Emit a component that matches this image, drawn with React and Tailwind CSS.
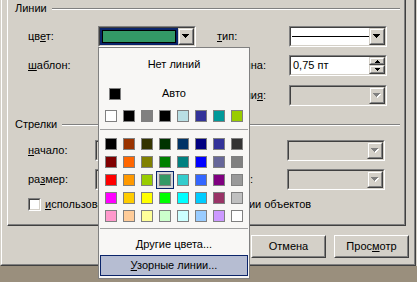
import React from 'react';

const recent = [
  'bg-[#ffffff]', 'bg-[#000000]', 'bg-[#808080]', 'bg-[#000000]',
  'bg-[#b9dfe4]', 'bg-[#333399]', 'bg-[#009999]', 'bg-[#99cc00]',
];

const palette = [
  'bg-[#000000]', 'bg-[#993300]', 'bg-[#333300]', 'bg-[#003300]', 'bg-[#003366]', 'bg-[#000080]', 'bg-[#333399]', 'bg-[#333333]',
  'bg-[#800000]', 'bg-[#ff6600]', 'bg-[#808000]', 'bg-[#008000]', 'bg-[#008080]', 'bg-[#0000ff]', 'bg-[#666699]', 'bg-[#808080]',
  'bg-[#ff0000]', 'bg-[#ff9900]', 'bg-[#99cc00]', 'bg-[#339966]', 'bg-[#33cccc]', 'bg-[#3366ff]', 'bg-[#800080]', 'bg-[#999999]',
  'bg-[#ff00ff]', 'bg-[#ffcc00]', 'bg-[#ffff00]', 'bg-[#00ff00]', 'bg-[#00ffff]', 'bg-[#00ccff]', 'bg-[#993366]', 'bg-[#c0c0c0]',
  'bg-[#ff99cc]', 'bg-[#ffcc99]', 'bg-[#ffff99]', 'bg-[#ccffcc]', 'bg-[#ccffff]', 'bg-[#99ccff]', 'bg-[#cc99ff]', 'bg-[#ffffff]',
];

const SELECTED = 19; // sea green

// pixel arrows, drawn with rects so they stay crisp
const DownArrow = ({ disabled }) => (
  <svg width="8" height="5" viewBox="0 0 8 5" shapeRendering="crispEdges">
    {disabled && <path d="M1 1h7v1H1zM2 2h5v1H2zM3 3h3v1H3zM4 4h1v1H4z" fill="#ffffff" />}
    <path d="M0 0h7v1H0zM1 1h5v1H1zM2 2h3v1H2zM3 3h1v1H3z" fill={disabled ? '#808080' : '#000000'} />
  </svg>
);

const SpinArrow = ({ up }) => (
  <svg width="5" height="3" viewBox="0 0 5 3" shapeRendering="crispEdges">
    <path d={up ? 'M2 0h1v1H2zM1 1h3v1H1zM0 2h5v1H0z' : 'M0 0h5v1H0zM1 1h3v1H1zM2 2h1v1H2z'} fill="#000000" />
  </svg>
);

// sunken 3d edit frame
const Field = ({ className = '', inner = '', children }) => (
  <div className={`border border-t-[#808080] border-l-[#808080] border-r-white border-b-white ${className}`}>
    <div className={`flex h-full border border-t-[#404040] border-l-[#404040] border-r-[#d4d0c8] border-b-[#d4d0c8] ${inner}`}>
      {children}
    </div>
  </div>
);

// raised button inside a combo / spinner
const ComboButton = ({ className = '', children }) => (
  <div className={`border border-t-[#d4d0c8] border-l-[#d4d0c8] border-r-[#404040] border-b-[#404040] bg-[#d4d0c8] ${className}`}>
    <div className="flex h-full items-center justify-center border border-t-white border-l-white border-r-[#808080] border-b-[#808080]">
      {children}
    </div>
  </div>
);

const PushButton = ({ children }) => (
  <div className="h-[23px] w-[75px] border border-t-white border-l-white border-r-[#404040] border-b-[#404040] bg-[#d4d0c8]">
    <div className="flex h-full items-center justify-center border border-t-[#d4d0c8] border-l-[#d4d0c8] border-r-[#808080] border-b-[#808080]">
      {children}
    </div>
  </div>
);

const GroupHead = ({ title, className = '' }) => (
  <div className={`flex h-[13px] items-center pl-[7px] pr-[4px] ${className}`}>
    <span>{title}</span>
    <div className="ml-[5px] flex-1 border-t border-b border-t-[#808080] border-b-white" />
  </div>
);

const DisabledCombo = () => (
  <Field className="h-[21px] w-[98px]" inner="bg-[#d4d0c8] justify-end">
    <ComboButton className="h-full w-[16px]">
      <DownArrow disabled />
    </ComboButton>
  </Field>
);

const Swatch = ({ color, selected }) => (
  <div
    className={`flex h-[18px] w-[18px] items-center justify-center ${
      selected ? 'border border-[#0a246a] bg-[#d4d5d8]' : ''
    }`}
  >
    <div className={`h-[12px] w-[12px] border border-[#808080] ${color}`} />
  </div>
);

const ColorPopup = () => (
  <div className="absolute left-[98px] top-[47px] flex h-[232px] w-[152px] flex-col border border-[#808080] bg-[#f8f7f5]">
    <div className="mt-[10px] text-center">Нет линий</div>
    <div className="mt-[16px] grid h-[12px] grid-cols-[22px_1fr_22px] items-center">
      <div className="pl-[10px]">
        <div className="h-[12px] w-[12px] border border-[#808080] bg-black" />
      </div>
      <div className="text-center">Авто</div>
      <div />
    </div>
    <div className="mx-[3px] mt-[8px] grid grid-cols-8">
      {recent.map((c, i) => (
        <Swatch key={i} color={c} />
      ))}
    </div>
    <div className="mx-[1px] mt-[4px] h-px bg-[#a0a0a0]" />
    <div className="mx-[3px] mt-[5px] grid grid-cols-8">
      {palette.map((c, i) => (
        <Swatch key={i} color={c} selected={i === SELECTED} />
      ))}
    </div>
    <div className="mx-[1px] mt-[3px] h-px bg-[#a0a0a0]" />
    <div className="mt-[9px] text-center">
      <u>Д</u>ругие цвета...
    </div>
    <div className="mx-[1px] mt-[4px] flex h-[21px] items-center justify-center border border-[#0a246a] bg-[#b6bdd2]">
      <span>
        <u>У</u>зорные линии...
      </span>
    </div>
  </div>
);

export default function App() {
  return (
    <div className="relative h-[282px] w-[417px] overflow-hidden bg-[#9a8f7d] font-['Liberation_Sans',Arial,sans-serif] text-[11px] leading-[13px] text-black">
      <div className="flex h-[266px]">
        {/* dialog frame */}
        <div className="h-full w-[416px] border-l border-r border-b border-l-[#d4d0c8] border-r-[#404040] border-b-[#404040]">
          <div className="flex h-full flex-col border-l border-r border-b border-l-white border-r-[#808080] border-b-[#808080] bg-[#d4d0c8]">
            {/* tab page */}
            <div className="ml-[5px] h-[226px] w-[399px] border-l border-r border-b border-l-white border-r-[#404040] border-b-[#404040]">
              <div className="flex h-full flex-col border-r border-b border-r-[#808080] border-b-[#808080]">
                <GroupHead title="Линии" className="mt-[2px]" />

                <div className="mt-[11px] flex h-[21px] items-center pl-[20px]">
                  <div className="w-[70px]">
                    цв<u>е</u>т:
                  </div>
                  <Field className="h-[21px] w-[98px]" inner="bg-[#0a246a]">
                    <div className="flex-1 pl-[1px] pt-[2px] pb-[1px]">
                      <div className="ml-[1px] h-[13px] w-[74px] border border-black bg-[#339966]" />
                    </div>
                    <ComboButton className="h-full w-[16px]">
                      <DownArrow />
                    </ComboButton>
                  </Field>
                  <div className="w-[21px]" />
                  <div className="w-[72px]">
                    <u>т</u>ип:
                  </div>
                  <Field className="h-[21px] w-[98px]" inner="bg-white">
                    <div className="flex-1 pl-[1px]">
                      <div className="mt-[8px] h-px bg-black" />
                    </div>
                    <ComboButton className="h-full w-[16px]">
                      <DownArrow />
                    </ComboButton>
                  </Field>
                </div>

                <div className="mt-[8px] flex h-[21px] items-center pl-[20px]">
                  <div className="w-[70px]">
                    <u>ш</u>аблон:
                  </div>
                  <DisabledCombo />
                  <div className="w-[21px]" />
                  <div className="flex w-[72px]">
                    <div className="flex w-[49px] justify-end whitespace-nowrap">толщина:</div>
                  </div>
                  <Field className="h-[21px] w-[98px]" inner="bg-white">
                    <div className="flex flex-1 items-center pl-[2px]">0,75 пт</div>
                    <div className="flex w-[16px] flex-col">
                      <ComboButton className="h-[8px] w-[16px]">
                        <SpinArrow up />
                      </ComboButton>
                      <ComboButton className="h-[9px] w-[16px]">
                        <SpinArrow />
                      </ComboButton>
                    </div>
                  </Field>
                </div>

                <div className="mt-[9px] flex h-[21px] items-center pl-[20px]">
                  <div className="w-[70px]" />
                  <DisabledCombo />
                  <div className="w-[21px]" />
                  <div className="flex w-[72px]">
                    <div className="flex w-[49px] justify-end whitespace-nowrap">
                      соединени<u>я</u>:
                    </div>
                  </div>
                  <DisabledCombo />
                </div>

                <GroupHead title="Стрелки" className="mt-[12px]" />

                <div className="mt-[9px] flex h-[21px] items-center pl-[20px]">
                  <div className="w-[67px]">
                    <u>н</u>ачало:
                  </div>
                  <DisabledCombo />
                  <div className="w-[24px]" />
                  <div className="w-[70px]">конец:</div>
                  <DisabledCombo />
                </div>

                <div className="mt-[8px] flex h-[21px] items-center pl-[20px]">
                  <div className="w-[67px]">
                    ра<u>з</u>мер:
                  </div>
                  <DisabledCombo />
                  <div className="w-[24px]" />
                  <div className="flex w-[70px]">
                    <div className="flex w-[36px] justify-end whitespace-nowrap">размер:</div>
                  </div>
                  <DisabledCombo />
                </div>

                <div className="mt-[8px] flex h-[13px] items-center pl-[20px]">
                  <div className="h-[13px] w-[13px] border border-t-[#808080] border-l-[#808080] border-r-white border-b-white">
                    <div className="h-full border border-t-[#404040] border-l-[#404040] border-r-[#d4d0c8] border-b-[#d4d0c8] bg-white" />
                  </div>
                  <div className="ml-[4px] whitespace-nowrap">
                    <u>и</u>спользовать по умолчанию при создании объектов
                  </div>
                </div>
              </div>
            </div>

            <div className="mt-[9px] flex justify-end gap-[8px] pr-[5px]">
              {/* OK button sits under the open colour list */}
              <PushButton />
              <PushButton>Отмена</PushButton>
              <PushButton>
                <span>
                  Прос<u>м</u>отр
                </span>
              </PushButton>
            </div>
          </div>
        </div>
        <div className="flex-1 bg-[#d4d0c8]" />
      </div>

      <ColorPopup />
    </div>
  );
}
